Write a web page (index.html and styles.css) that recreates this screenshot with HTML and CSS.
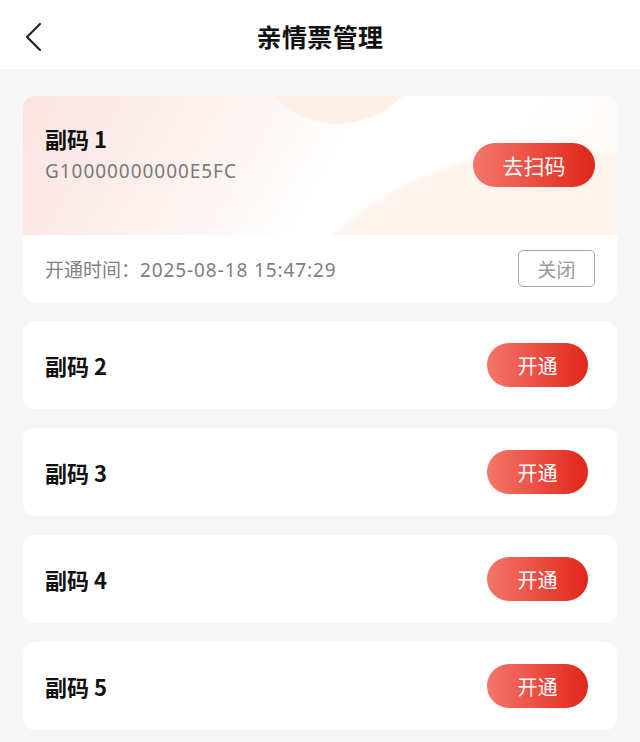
FILE: index.html
```html
<!DOCTYPE html>
<html lang="zh-CN">
<head>
<meta charset="utf-8">
<title>亲情票管理</title>
<link rel="stylesheet" href="styles.css">
</head>
<body>
<header class="nav">
  <span class="back">
    <svg width="20" height="30" viewBox="0 0 20 30"><path d="M15 2 L2 15 L15 28" fill="none" stroke="#222" stroke-width="2.2" stroke-linecap="round" stroke-linejoin="round"/></svg>
  </span>
  <h1 class="nav-title">亲情票管理</h1>
</header>
<main class="list">
  <section class="card card-active">
    <div class="card-top">
      <div class="info">
        <div class="name">副码 1</div>
        <div class="code">G10000000000E5FC</div>
      </div>
      <button class="btn btn-scan">去扫码</button>
    </div>
    <div class="card-bottom">
      <span class="time"><span class="time-label">开通时间：</span><span class="time-value">2025-08-18 15:47:29</span></span>
      <button class="btn-close">关闭</button>
    </div>
  </section>
  <section class="card card-row">
    <div class="name">副码 2</div>
    <button class="btn btn-open">开通</button>
  </section>
  <section class="card card-row">
    <div class="name">副码 3</div>
    <button class="btn btn-open">开通</button>
  </section>
  <section class="card card-row">
    <div class="name">副码 4</div>
    <button class="btn btn-open">开通</button>
  </section>
  <section class="card card-row">
    <div class="name">副码 5</div>
    <button class="btn btn-open">开通</button>
  </section>
</main>
</body>
</html>
```

FILE: styles.css
```css
* { box-sizing: border-box; margin: 0; padding: 0; }
html, body { height: 100%; }
body {
  background: #f6f6f6;
  font-family: "Noto Sans CJK SC", "Noto Sans", sans-serif;
  color: #111;
  overflow: hidden;
}
.nav {
  height: 69px;
  background: #fff;
  display: flex;
  align-items: center;
  justify-content: center;
  position: relative;
}
.back {
  position: absolute;
  left: 25px;
  top: 22px;
  width: 20px;
  height: 30px;
  display: block;
}
.back svg { display: block; }
.nav-title {
  font-size: 25px;
  font-weight: 700;
  color: #111;
  letter-spacing: 0.4px;
  margin-top: 2px;
}
.list {
  padding: 27px 23px 0;
  display: flex;
  flex-direction: column;
  gap: 19px;
}
.card {
  background: #fff;
  border-radius: 12px;
  overflow: hidden;
}
.card-top {
  height: 139px;
  padding: 27px 22px 0;
  display: flex;
  justify-content: space-between;
  align-items: flex-start;
  background:
    radial-gradient(circle 330px at 530px 380px, rgba(253, 241, 231, 0.85) 0%, rgba(253, 242, 233, 0.8) 98%, rgba(253, 243, 236, 0) 100%),
    radial-gradient(circle 90px at 315px -61px, rgba(252, 236, 224, 0.9) 0%, rgba(252, 237, 226, 0.85) 97%, rgba(252, 236, 226, 0) 100%),
    linear-gradient(120deg, #fae3e1 0%, #fcece9 18%, #fdf5f3 36%, #ffffff 52%, #ffffff 75%, #fefaf7 100%);
}
.name {
  font-size: 22px;
  font-weight: 700;
  line-height: 30px;
  color: #111;
}
.code {
  margin-top: 4px;
  font-family: "Noto Sans", "Liberation Sans", sans-serif;
  font-size: 19px;
  letter-spacing: 0.95px;
  line-height: 28px;
  color: #7a7a7a;
}
.btn {
  border: none;
  border-radius: 22px;
  height: 44px;
  color: #fff;
  font-family: "Noto Sans CJK SC", sans-serif;
  font-size: 20px;
  background: linear-gradient(90deg, #f3766b 0%, #ec4e42 50%, #e0261b 100%);
}
.btn-scan {
  width: 122px;
  margin-top: 20px;
  font-size: 21px;
}
.card-bottom {
  height: 67px;
  padding: 0 22px;
  display: flex;
  justify-content: space-between;
  align-items: center;
}
.time {
  font-size: 19px;
  color: #808080;
}
.time-value {
  font-family: "Noto Sans", sans-serif;
  letter-spacing: 0.9px;
}
.btn-close {
  width: 77px;
  height: 37px;
  border: 1.5px solid #a8a8a8;
  border-radius: 5px;
  background: #fff;
  color: #999;
  font-family: "Noto Sans CJK SC", sans-serif;
  font-size: 19px;
}
.card-row {
  height: 88px;
  padding: 0 29px 0 22px;
  display: flex;
  justify-content: space-between;
  align-items: center;
}
.btn-open {
  width: 101px;
}
```
